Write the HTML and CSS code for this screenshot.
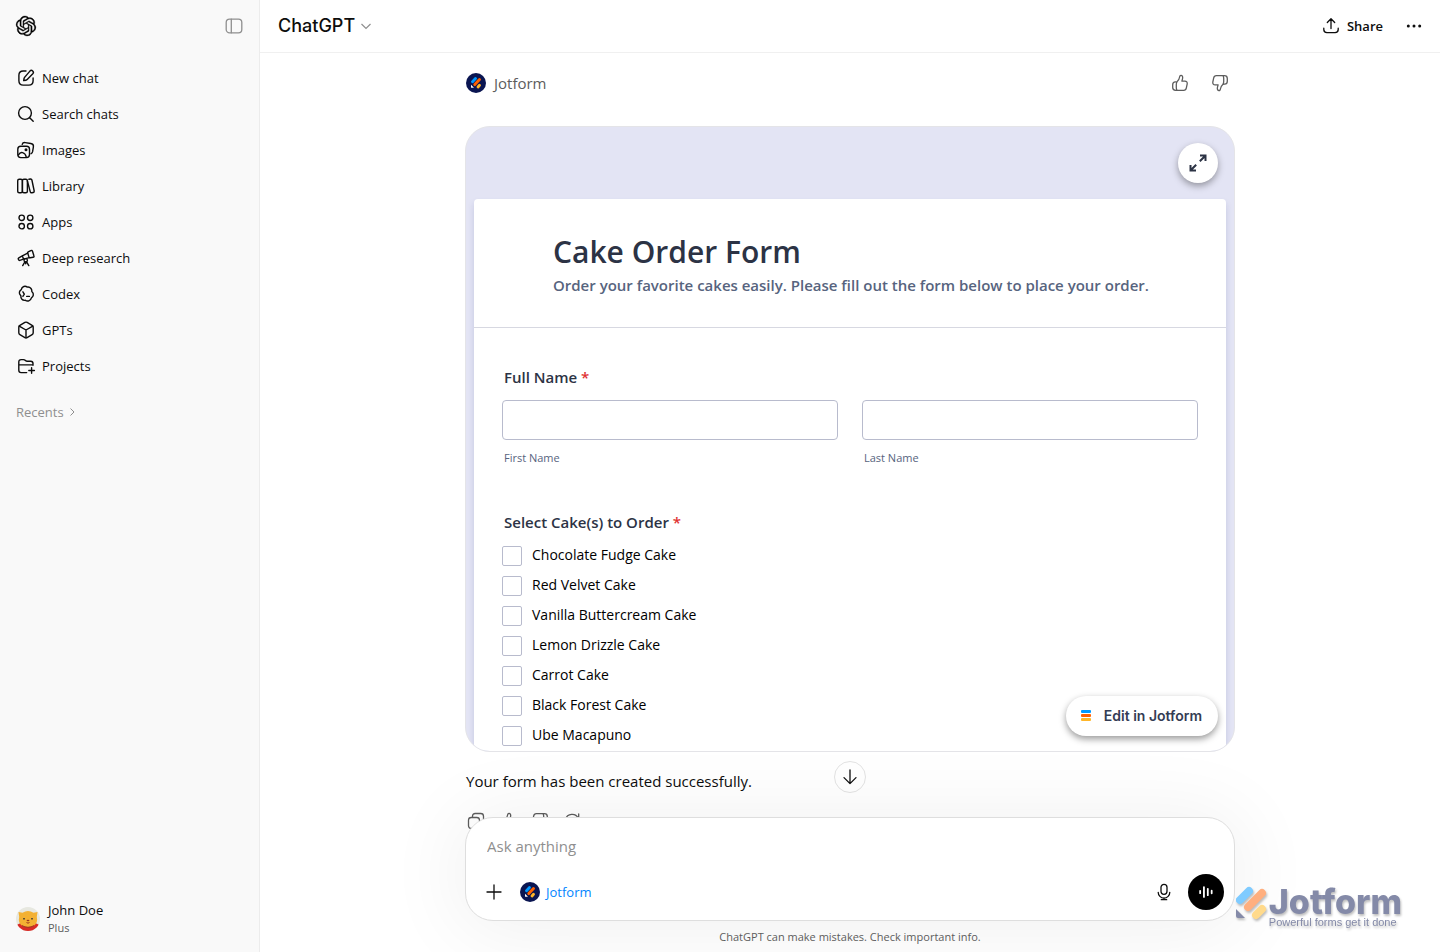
FILE: index.html
```html
<!DOCTYPE html>
<html lang="en">
    <head>
        <meta charset="UTF-8">
        <meta name="viewport" content="width=device-width, initial-scale=1.0">
        <title>ChatGPT</title>
        <link rel="stylesheet" href="styles.css">
    </head>
    <body>
        <!-- shared icons -->
        <svg class="sprite" aria-hidden="true">
            <symbol id="jot" viewBox="0 0 20 20">
                <circle cx="10" cy="10" r="10" fill="#0a1551"/>
                <g stroke-linecap="round" stroke-width="2.9" fill="none">
                    <path d="M6.5 8.7l3-3.1" stroke="#0099ff"/>
                    <path d="M8.8 11.6l4.7-5" stroke="#ff6100"/>
                    <path d="M12 13.9l1.5-1.6" stroke="#ffb629"/>
                </g>
                <path d="M5 11.8l3 3H5.6a.6.6 0 0 1-.6-.6z" fill="#fff"/>
            </symbol>
            <symbol id="up" viewBox="0 0 20 20">
                <path d="M7.2 8.6C8.7 7.4 9.3 5.7 9.6 4c.2-1.1.7-1.8 1.6-1.6 1.5.3 1.7 2 1.3 3.5l-.6 2.2h3c1.6 0 2.6 1.2 2.3 2.7l-.9 4.4c-.3 1.4-1.2 2.2-2.6 2.2H5.6c-1.8 0-2.9-1.1-2.9-2.8v-2.8c0-1.7 1-2.9 2.7-2.9.8 0 1.4-.1 1.8-.3zM7.2 8.6c-.7.8-.9 1.7-.9 3v3.2c0 1.1.2 1.9.8 2.6"/>
            </symbol>
            <symbol id="down" viewBox="0 0 20 20">
                <g transform="rotate(180 10 10)"><path d="M7.2 8.6C8.7 7.4 9.3 5.7 9.6 4c.2-1.1.7-1.8 1.6-1.6 1.5.3 1.7 2 1.3 3.5l-.6 2.2h3c1.6 0 2.6 1.2 2.3 2.7l-.9 4.4c-.3 1.4-1.2 2.2-2.6 2.2H5.6c-1.8 0-2.9-1.1-2.9-2.8v-2.8c0-1.7 1-2.9 2.7-2.9.8 0 1.4-.1 1.8-.3zM7.2 8.6c-.7.8-.9 1.7-.9 3v3.2c0 1.1.2 1.9.8 2.6"/></g>
            </symbol>
        </svg>

        <div class="app">
            <aside class="sidebar">
                <div class="sidebar-top">
                    <a href="#" aria-label="Home">
                        <svg class="logo" viewBox="0 0 24 24"><path d="M22.2819 9.8211a5.9847 5.9847 0 0 0-.5157-4.9108 6.0462 6.0462 0 0 0-6.5098-2.9A6.0651 6.0651 0 0 0 4.9807 4.1818a5.9847 5.9847 0 0 0-3.9977 2.9 6.0462 6.0462 0 0 0 .7427 7.0966 5.98 5.98 0 0 0 .511 4.9107 6.051 6.051 0 0 0 6.5146 2.9001A5.9847 5.9847 0 0 0 13.2599 24a6.0557 6.0557 0 0 0 5.7718-4.2058 5.9894 5.9894 0 0 0 3.9977-2.9001 6.0557 6.0557 0 0 0-.7475-7.0729zm-9.022 12.6081a4.4755 4.4755 0 0 1-2.8764-1.0408l.1419-.0804 4.7783-2.7582a.7948.7948 0 0 0 .3927-.6813v-6.7369l2.02 1.1686a.071.071 0 0 1 .038.052v5.5826a4.504 4.504 0 0 1-4.4945 4.4944zm-9.6607-4.1254a4.4708 4.4708 0 0 1-.5346-3.0137l.142.0852 4.783 2.7582a.7712.7712 0 0 0 .7806 0l5.8428-3.3685v2.3324a.0804.0804 0 0 1-.0332.0615L9.74 19.9502a4.4992 4.4992 0 0 1-6.1408-1.6464zM2.3408 7.8956a4.485 4.485 0 0 1 2.3655-1.9728V11.6a.7664.7664 0 0 0 .3879.6765l5.8144 3.3543-2.0201 1.1685a.0757.0757 0 0 1-.071 0l-4.8303-2.7865A4.504 4.504 0 0 1 2.3408 7.872zm16.5963 3.8558L13.1038 8.364 15.1192 7.2a.0757.0757 0 0 1 .071 0l4.8303 2.7913a4.4944 4.4944 0 0 1-.6765 8.1042v-5.6772a.79.79 0 0 0-.407-.667zm2.0107-3.0231l-.142-.0852-4.7735-2.7818a.7759.7759 0 0 0-.7854 0L9.409 9.2297V6.8974a.0662.0662 0 0 1 .0284-.0615l4.8303-2.7866a4.4992 4.4992 0 0 1 6.6802 4.66zM8.3065 12.863l-2.02-1.1638a.0804.0804 0 0 1-.038-.0567V6.0742a4.4992 4.4992 0 0 1 7.3757-3.4537l-.142.0805L8.704 5.459a.7948.7948 0 0 0-.3927.6813zm1.0976-2.3654l2.602-1.4998 2.6069 1.4998v2.9994l-2.5974 1.4997-2.6067-1.4997Z"/></svg>
                    </a>
                    <button class="icon-btn muted" aria-label="Close sidebar">
                        <svg class="icon" viewBox="0 0 20 20"><rect x="2.2" y="3.2" width="15.6" height="13.6" rx="3.4"/><path d="M7.3 3.2v13.6"/></svg>
                    </button>
                </div>

                <nav class="menu">
                    <a href="#"><svg class="icon" viewBox="0 0 20 20"><path d="M10 3H7.2C4.300 3 2.900 4.400 2.900 7.200v5.600c0 2.900 1.400 4.300 4.300 4.300h5.600c2.900 0 4.300-1.400 4.300-4.300V10"/><path d="M13.900 3.100a1.900 1.900 0 0 1 2.900 2.700l-5.600 5.700c-.7.700-1.700 1-3.500 1.100.1-1.800.5-2.900 1.100-3.500z"/></svg>New chat</a>
                    <a href="#"><svg class="icon" viewBox="0 0 20 20"><circle cx="9" cy="9" r="6.400"/><path d="M13.700 13.700l3.500 3.500"/></svg>Search chats</a>
                    <a href="#"><svg class="icon" viewBox="0 0 20 20"><rect x="1.800" y="6.300" width="11.700" height="11.300" rx="3"/><path d="M6.200 4.400c.4-1.500 1.400-2 3-1.800l5.600.9c2 .3 2.900 1.400 2.600 3.400l-.8 4.800c-.2 1-.7 1.700-1.500 2"/><path d="M2.500 14.800c1-1.700 2.500-2.600 4.100-2.100 1.700.5 3.200 2.100 3.700 4.500"/><circle cx="10" cy="9.700" r=".8" fill="currentColor"/></svg>Images</a>
                    <a href="#"><svg class="icon" viewBox="0 0 20 20"><rect x="1.700" y="3.200" width="4.700" height="13.600" rx="1.500"/><rect x="6.400" y="3.200" width="5" height="13.600" rx="1.500"/><path d="M12.900 3.300l1.500-.3c.8-.1 1.300.2 1.500 1l2.300 11c.1.800-.2 1.400-.9 1.500l-1.500.3c-.7.100-1.300-.2-1.500-1L11.400 5"/></svg>Library</a>
                    <a href="#"><svg class="icon" viewBox="0 0 20 20"><circle cx="5.700" cy="5.800" r="2.700"/><circle cx="14.200" cy="5.800" r="2.700"/><circle cx="5.700" cy="14.200" r="2.700"/><circle cx="14.200" cy="14.200" r="2.700"/></svg>Apps</a>
                    <a href="#"><svg class="icon" viewBox="0 0 20 20"><path d="M12.200 3.900l2.600-1.300c.8-.4 1.400-.1 1.700.6l1.400 4.600c.3.800 0 1.400-.8 1.500l-2.900.5c-.6.100-1-.1-1.200-.7l-1.300-4c-.2-.6 0-1 .5-1.200z"/><path d="M11.700 5.100L6.300 7.800l1.300 3.400 5.800-1.600M6.300 7.800l-3.500 2c-.5.300-.7.700-.5 1.200l.3.800c.2.500.6.700 1.200.6l3.800-1.200"/><circle cx="9.700" cy="12.300" r="1.700"/><path d="M8.900 13.800l-2.200 3.800M10.600 13.800l2.200 3.800M9.700 14v1.800"/></svg>Deep research</a>
                    <a href="#"><svg class="icon" viewBox="0 0 20 20"><path d="M7.700 2.500c1.200-.5 2.600-.2 3.700.6 1.400-.2 2.700.3 3.600 1.400.8 1 1 1.900.8 3 1.200 1 1.800 2.200 1.500 3.700-.2 1.200-.9 2.100-1.900 2.600-.3 1.400-1.200 2.500-2.600 3-1.100.4-2.300.2-3.400-.5-1.500.2-2.800-.2-3.700-1.300-.7-.9-1-1.900-.8-3.100-1.200-1-1.800-2.200-1.500-3.700.2-1.100.8-2 1.900-2.600.2-1.500 1.100-2.600 2.400-3.100z"/><path d="M6.900 7.800l1.400 2.300-1.400 2.300M10.700 12.400h2.700"/></svg>Codex</a>
                    <a href="#"><svg class="icon" viewBox="0 0 20 20"><path d="M8.900 2.400a2.200 2.200 0 0 1 2.200 0l5 2.900c.7.400 1.100 1.100 1.100 1.900v5.600c0 .8-.4 1.500-1.100 1.900l-5 2.900a2.200 2.200 0 0 1-2.200 0l-5-2.900c-.7-.4-1.100-1.100-1.100-1.900V7.200c0-.8.400-1.500 1.100-1.900z"/><path d="M3.200 6.100l6.800 3.900 6.800-3.900M10 10v7.800"/></svg>GPTs</a>
                    <a href="#"><svg class="icon" viewBox="0 0 20 20"><path d="M17 9.200V7.500c0-1.500-.8-2.300-2.300-2.300h-3.600c-.6 0-1-.2-1.500-.6-.8-.7-1.300-1-2.200-1H5.100c-1.500 0-2.300.8-2.300 2.300v8.400c0 1.500.8 2.300 2.300 2.300h5.600M2.800 8.900h14"/><path d="M15.600 11.700v5.600M12.800 14.500h5.600"/></svg>Projects</a>
                </nav>

                <button class="recents">Recents
                    <svg viewBox="0 0 12 12"><path d="M4.500 2.500L8 6l-3.500 3.500"/></svg>
                </button>

                <button class="account">
                    <svg class="avatar" viewBox="0 0 24 24">
                        <clipPath id="round"><circle cx="12" cy="12" r="12"/></clipPath>
                        <g clip-path="url(#round)">
                            <rect width="24" height="24" fill="#e7e8e0"/>
                            <path d="M1 18c3-2 5-3 11-3s8 1 11 3l-2 6H3z" fill="#d92b27"/>
                            <path d="M2.500 5l4 .8a10 10 0 0 1 11 0l4-.8-.7 5c1.500 6-2 10-8.800 10s-10.300-4-8.800-10z" fill="#f3b133"/>
                            <path d="M6 18.600q6 3.400 12 0" stroke="#9c3b25" stroke-width="1" fill="none"/>
                            <path d="M8 11v1.600M16 11v1.600" stroke="#333" stroke-width="1.500"/>
                            <ellipse cx="12" cy="13.500" rx="1.400" ry=".8" fill="#9b3420"/>
                            <path d="M10.500 15.500q1.500 1.300 3 0" stroke="#9b3420" fill="none"/>
                        </g>
                    </svg>
                    <span class="account-text">
                        <span>John Doe</span>
                        <small>Plus</small>
                    </span>
                </button>
            </aside>

            <main class="main">
                <header class="header">
                    <button class="model">ChatGPT
                        <svg viewBox="0 0 16 16"><path d="M3.500 6L8 10.500 12.500 6"/></svg>
                    </button>
                    <div class="header-actions">
                        <button class="share">
                            <svg class="icon" viewBox="0 0 20 20"><path d="M10 12.500V3M6.300 6.500L10 2.800l3.700 3.700M2.800 12.200v1.300c0 2 1.100 3.100 3.100 3.100h8.200c2 0 3.100-1.100 3.100-3.100v-1.300"/></svg>
                            Share
                        </button>
                        <button class="icon-btn" aria-label="More">
                            <svg class="icon dots" viewBox="0 0 20 20"><circle cx="4.300" cy="10" r="1.500"/><circle cx="10" cy="10" r="1.500"/><circle cx="15.700" cy="10" r="1.500"/></svg>
                        </button>
                    </div>
                </header>

                <section class="thread column">
                    <div class="source">
                        <svg class="jot"><use href="#jot"/></svg>
                        <span>Jotform</span>
                        <div class="rate">
                            <button class="icon-btn" aria-label="Good response"><svg class="icon"><use href="#up"/></svg></button>
                            <button class="icon-btn" aria-label="Bad response"><svg class="icon"><use href="#down"/></svg></button>
                        </div>
                    </div>

                    <div class="card">
                        <form class="form">
                            <div class="form-header">
                                <h1>Cake Order Form</h1>
                                <p>Order your favorite cakes easily. Please fill out the form below to place your order.</p>
                            </div>
                            <fieldset class="names">
                                <legend>Full Name <span class="required">*</span></legend>
                                <div class="name-row">
                                    <div class="field">
                                        <input type="text" id="first">
                                        <label for="first">First Name</label>
                                    </div>
                                    <div class="field">
                                        <input type="text" id="last">
                                        <label for="last">Last Name</label>
                                    </div>
                                </div>
                            </fieldset>
                            <fieldset class="cakes">
                                <legend>Select Cake(s) to Order <span class="required">*</span></legend>
                                <label><input type="checkbox"><span>Chocolate Fudge Cake</span></label>
                                <label><input type="checkbox"><span>Red Velvet Cake</span></label>
                                <label><input type="checkbox"><span>Vanilla Buttercream Cake</span></label>
                                <label><input type="checkbox"><span>Lemon Drizzle Cake</span></label>
                                <label><input type="checkbox"><span>Carrot Cake</span></label>
                                <label><input type="checkbox"><span>Black Forest Cake</span></label>
                                <label><input type="checkbox"><span>Ube Macapuno</span></label>
                            </fieldset>
                        </form>
                        <button class="expand" aria-label="Expand">
                            <svg viewBox="0 0 20 20"><path d="M11.800 8.200l5-5M12 2.500h5.500V8M8.200 11.800l-5 5M2.500 12v5.500H8"/></svg>
                        </button>
                        <button class="edit">
                            <svg viewBox="0 0 12 12"><rect x="1" y="0" width="10" height="3" rx="1" fill="#09f"/><rect x="1" y="4" width="10" height="3" rx="1" fill="#ff6100"/><rect x="1" y="8" width="10" height="3" rx="1" fill="#ffb629"/></svg>
                            Edit in Jotform
                        </button>
                    </div>

                    <p class="reply">Your form has been created successfully.</p>
                    <div class="reply-actions">
                        <button class="icon-btn" aria-label="Copy"><svg class="icon" viewBox="0 0 20 20"><rect x="2.500" y="6.500" width="11" height="11" rx="2.800"/><path d="M6.500 6.300V5.300c0-1.800 1-2.800 2.800-2.800h5.400c1.800 0 2.800 1 2.800 2.800v5.400c0 1.800-1 2.800-2.800 2.800h-1"/></svg></button>
                        <button class="icon-btn" aria-label="Good response"><svg class="icon"><use href="#up"/></svg></button>
                        <button class="icon-btn" aria-label="Bad response"><svg class="icon"><use href="#down"/></svg></button>
                        <button class="icon-btn" aria-label="Try again"><svg class="icon" viewBox="0 0 20 20"><path d="M3.500 8.500a6.800 6.800 0 0 1 12.800-1M16.700 3v4.700h-4.500M16.500 11.500a6.800 6.800 0 0 1-12.800 1M3.300 17v-4.700h4.500"/></svg></button>
                    </div>
                </section>

                <div class="dock">
                    <div class="column">
                        <button class="scroll-down" aria-label="Scroll to bottom">
                            <svg class="icon" viewBox="0 0 20 20"><path d="M10 3v13.500M4 10.600l6 6 6-6"/></svg>
                        </button>
                        <div class="composer">
                            <input type="text" placeholder="Ask anything" aria-label="Ask anything">
                            <div class="tools">
                                <button class="icon-btn" aria-label="Add"><svg class="icon" viewBox="0 0 20 20"><path d="M10 3v14M3 10h14"/></svg></button>
                                <button class="chip"><svg class="jot"><use href="#jot"/></svg>Jotform</button>
                                <button class="icon-btn mic" aria-label="Dictate"><svg class="icon" viewBox="0 0 20 20"><rect x="7" y="2.300" width="6" height="10" rx="3"/><path d="M4.200 10.300a5.800 5.800 0 0 0 11.600 0M10 16v1.700M7.300 17.700h5.400"/></svg></button>
                                <button class="voice" aria-label="Voice mode"><svg viewBox="0 0 20 20"><path d="M3.500 8.700v2.600M7.700 4.500v11M12 6.500v7M16.300 8.500v3"/></svg></button>
                            </div>
                        </div>
                    </div>
                    <p class="note">ChatGPT can make mistakes. Check important info.</p>
                </div>

                <div class="watermark">
                    <svg viewBox="0 0 34 36">
                        <g stroke-linecap="round" stroke-width="8" fill="none">
                            <path d="M5 12l9-9" stroke="#7fcbff"/>
                            <path d="M13 19L27 5" stroke="#ffaf7f"/>
                            <path d="M21 27l6-6" stroke="#ffda8c"/>
                        </g>
                        <path d="M1 21l9 9H3a2 2 0 0 1-2-2z" fill="#848aa8"/>
                    </svg>
                    <div>
                        <strong>Jotform</strong>
                        <span>Powerful forms get it done</span>
                    </div>
                </div>
            </main>
        </div>
    </body>
</html>
```

FILE: styles.css
```css
*{
    box-sizing: border-box;
}
body{
    margin: 0;
    font-family: "Open Sans", "Noto Sans", sans-serif;
    font-size: 13px;
    line-height: 20px;
    color: #0d0d0d;
    background: #fff;
}
button, input{
    font: inherit;
    color: inherit;
}
button{
    display: flex;
    align-items: center;
    padding: 0;
    border: 0;
    background: none;
    cursor: pointer;
}
a{
    color: inherit;
    text-decoration: none;
}
p, h1{
    margin: 0;
}
svg{
    display: block;
    flex: none;
}
.sprite{
    position: absolute;
    width: 0;
    height: 0;
}
.icon{
    width: 20px;
    height: 20px;
    fill: none;
    stroke: currentColor;
    stroke-width: 1.3;
    stroke-linecap: round;
    stroke-linejoin: round;
}
.icon-btn{
    justify-content: center;
    width: 32px;
    height: 32px;
}
.muted{
    color: #8f8f8f;
}
.jot{
    width: 20px;
    height: 20px;
}

.app{
    display: flex;
    height: 100vh;
}

/* sidebar */
.sidebar{
    display: flex;
    flex-direction: column;
    width: 260px;
    flex: none;
    background: #f9f9f9;
    border-right: 1px solid #ececec;
}
.sidebar-top{
    display: flex;
    align-items: center;
    justify-content: space-between;
    height: 52px;
    padding: 0 9px 0 16px;
    margin-bottom: 8px;
}
.logo{
    width: 20px;
    height: 20px;
    stroke: currentColor;
    stroke-width: .4;
    overflow: visible;
}
.menu a{
    display: flex;
    align-items: center;
    gap: 6px;
    height: 36px;
    padding: 0 16px;
}
.menu .icon{
    stroke-width: 1.4;
}
.recents{
    gap: 2px;
    margin-top: 18px;
    padding: 0 16px;
    color: #8f8f8f;
}
.recents svg{
    width: 12px;
    height: 12px;
    fill: none;
    stroke: currentColor;
}
.account{
    gap: 8px;
    margin-top: auto;
    padding: 0 16px 15px;
    text-align: left;
}
.avatar{
    width: 24px;
    height: 24px;
}
.account-text span, .account-text small{
    display: block;
    line-height: 18px;
}
.account-text small{
    font-size: 11px;
    color: #5d5d5d;
}

/* main */
.main{
    position: relative;
    display: flex;
    flex-direction: column;
    flex: 1;
    min-width: 0;
    overflow: hidden;
}
.header{
    display: flex;
    align-items: center;
    justify-content: space-between;
    flex: none;
    height: 53px;
    padding: 0 10px 0 18px;
    border-bottom: 1px solid #f0f0f0;
}
.model{
    gap: 3px;
    font-family: Inter, sans-serif;
    font-size: 18px;
    line-height: 28px;
    font-weight: 500;
}
.model svg{
    width: 16px;
    height: 16px;
    fill: none;
    stroke: #8f8f8f;
    stroke-width: 1.2;
}
.header-actions{
    display: flex;
    align-items: center;
    gap: 15px;
}
.share{
    gap: 6px;
    font-weight: 600;
}
.dots{
    fill: currentColor;
    stroke: none;
}
.column{
    width: 100%;
    max-width: 770px;
    margin: 0 auto;
}
.source{
    display: flex;
    align-items: center;
    gap: 8px;
    height: 60px;
    padding: 0 1px;
    font-size: 15px;
    color: #5d5d5d;
}
.rate{
    display: flex;
    gap: 8px;
    margin-left: auto;
}
.rate .icon-btn:last-child{
    margin-right: -2px;
}

.card{
    position: relative;
    margin-top: 13px;
    padding: 72px 8px 0;
    overflow: hidden;
    background: #e3e4f4;
    border: 1px solid #e4e4e8;
    border-radius: 25px;
}
.form{
    background: #fff;
    border-radius: 4px 4px 0 0;
    box-shadow: 0 4px 6px rgba(60, 70, 150, .18);
    color: #2c3345;
}
.form-header{
    padding: 31px 28px 30px 79px;
    border-bottom: 1px solid #d7d8e1;
}
.form-header h1{
    font-size: 30px;
    line-height: 44px;
    font-weight: 600;
}
.form-header p{
    font-size: 15px;
    line-height: 23px;
    font-weight: 600;
    color: #57647e;
}
fieldset{
    margin: 0;
    padding: 0 28px;
    border: 0;
}
legend{
    padding: 0 2px;
    font-size: 15px;
    line-height: 22px;
    font-weight: 600;
}
.required{
    color: #e03131;
}
.names{
    margin-top: 38px;
}
.name-row{
    display: flex;
    gap: 24px;
    padding-top: 12px;
}
.field{
    flex: 1;
}
.field input{
    display: block;
    width: 100%;
    height: 40px;
    padding: 0 10px;
    border: 1px solid #b8bbcd;
    border-radius: 4px;
}
.field label{
    display: block;
    margin: 10px 2px 0;
    font-size: 11px;
    line-height: 16px;
    color: #57647e;
}
.cakes{
    margin-top: 45px;
}
.cakes legend{
    margin-bottom: 8px;
}
.cakes label{
    display: flex;
    align-items: center;
    gap: 10px;
    height: 30px;
    color: #000;
    font-size: 14px;
}
.cakes label span{
    padding-bottom: 2px;
}
.cakes input{
    appearance: none;
    width: 20px;
    height: 20px;
    margin: 0;
    border: 1px solid #b8bbcd;
    border-radius: 2px;
}
.expand{
    position: absolute;
    top: 16px;
    right: 16px;
    justify-content: center;
    width: 40px;
    height: 40px;
    background: #fff;
    border-radius: 50%;
    box-shadow: 0 3px 7px rgba(0, 0, 0, .35);
}
.expand svg{
    width: 20px;
    height: 20px;
    fill: none;
    stroke: #2c3345;
    stroke-width: 2;
}
.edit{
    position: absolute;
    right: 16px;
    bottom: 15px;
    gap: 12px;
    height: 40px;
    padding: 0 16px 0 14px;
    background: #fff;
    border-radius: 20px;
    box-shadow: 0 3px 7px rgba(0, 0, 0, .4);
    font-family: Inter, sans-serif;
    font-size: 14px;
    font-weight: 600;
    color: #343c54;
}
.edit svg{
    width: 12px;
    height: 12px;
}
.reply{
    margin: 16px 1px 0;
    font-size: 15px;
    line-height: 26px;
}
.reply-actions{
    display: flex;
    margin: 11px 0 0 -5px;
    color: #5d5d5d;
}

/* composer floats over the end of the thread */
.dock{
    position: absolute;
    left: 0;
    right: 0;
    bottom: 0;
}
.scroll-down{
    justify-content: center;
    width: 32px;
    height: 32px;
    margin: 0 auto 24px;
    background: #fff;
    border: 1px solid #e3e3e3;
    border-radius: 50%;
}
.composer{
    padding: 14px 10px 10px 12px;
    background: #fff;
    border: 1px solid #dedede;
    border-radius: 28px;
    box-shadow: 0 4px 80px 8px rgba(0, 0, 0, .06);
}
.composer input{
    display: block;
    width: 100%;
    height: 28px;
    padding: 0 9px;
    border: 0;
    outline: 0;
    background: none;
    font-size: 15px;
}
.composer input::placeholder{
    color: #8f8f8f;
    opacity: 1;
}
.tools{
    display: flex;
    align-items: center;
    margin-top: 14px;
}
.chip{
    gap: 6px;
    margin-left: 10px;
    color: #0285ff;
}
.mic{
    margin: 0 8px 0 auto;
}
.voice{
    justify-content: center;
    width: 36px;
    height: 36px;
    background: #000;
    border-radius: 50%;
}
.voice svg{
    width: 18px;
    height: 18px;
    fill: none;
    stroke: #fff;
    stroke-width: 2;
    stroke-linecap: round;
}
.note{
    padding: 8px 0 7px;
    font-size: 11px;
    line-height: 16px;
    text-align: center;
    color: #5d5d5d;
}

.watermark{
    position: absolute;
    right: 38px;
    bottom: 24px;
    display: flex;
    color: #848aa8;
    filter: drop-shadow(1px 2px 1px rgba(0, 0, 0, .25));
}
.watermark svg{
    width: 34px;
    height: 36px;
    overflow: visible;
}
.watermark strong{
    display: block;
    font-family: Inter, sans-serif;
    font-size: 34px;
    line-height: 28px;
    font-weight: 800;
}
.watermark span{
    display: block;
    font-family: "Liberation Sans", Arial, sans-serif;
    font-size: 11px;
    line-height: 12px;
}
```
